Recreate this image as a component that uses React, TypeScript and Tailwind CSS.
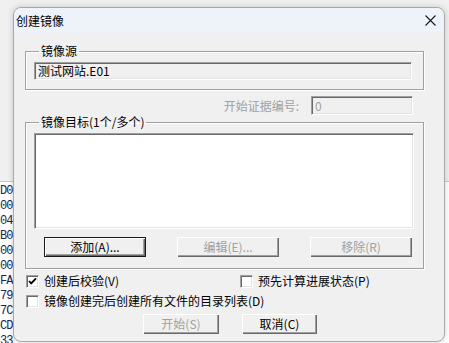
import React from "react";

const cjk = { fontFamily: '"Noto Sans CJK SC", "Noto Sans", sans-serif' };

const hexRows = ["D0", "00", "04", "B0", "00", "00", "FA", "79", "7C", "CD", "33"];

function Sunken({ className, children }: { className: string; children?: React.ReactNode }) {
  return (
    <div
      className={
        "border border-t-[#a0a0a0] border-l-[#a0a0a0] border-r-white border-b-white shadow-[inset_1px_1px_0_#696969,inset_-1px_-1px_0_#e3e3e3] " +
        className
      }
    >
      {children}
    </div>
  );
}

function Button({
  label,
  width,
  disabled,
  isDefault,
}: {
  label: string;
  width: string;
  disabled?: boolean;
  isDefault?: boolean;
}) {
  const base = "flex h-[20px] items-center justify-center text-[12px] leading-[14px] " + width;
  if (isDefault) {
    return (
      <div className={base + " border border-[#1a1a1a] bg-[#f0f0f0] text-black shadow-[inset_1px_1px_0_white,inset_-1px_-1px_0_#696969,inset_-2px_-2px_0_#a0a0a0]"}>
        {label}
      </div>
    );
  }
  return (
    <div
      className={
        base +
        " bg-[#f0f0f0] shadow-[inset_1px_1px_0_white,inset_-1px_-1px_0_#696969,inset_-2px_-2px_0_#a0a0a0] " +
        (disabled ? "text-[#a0a0a0]" : "text-black")
      }
    >
      {label}
    </div>
  );
}

function Checkbox({ label, checked }: { label: string; checked?: boolean }) {
  return (
    <div className="flex items-center gap-[5px]">
      <div className="flex h-[13px] w-[13px] items-center justify-center border border-t-[#a0a0a0] border-l-[#a0a0a0] border-r-white border-b-white bg-white shadow-[inset_1px_1px_0_#696969,inset_-1px_-1px_0_#e3e3e3]">
        {checked && (
          <svg width="9" height="9" viewBox="0 0 9 9">
            <path d="M1 4 L3.2 6.4 L8 1.4" fill="none" stroke="#000" strokeWidth="1.8" />
          </svg>
        )}
      </div>
      <span className="text-[12px] leading-[14px] text-black">{label}</span>
    </div>
  );
}

export default function App() {
  return (
    <div className="relative h-[343px] w-[449px] overflow-hidden bg-white" style={cjk}>
      {/* background window */}
      <div className="flex h-full flex-col">
        <div className="h-[182px] shrink-0 border-b border-[#c8c8c8] bg-[#f0f0f0]" />
        <div className="flex flex-1 flex-col overflow-hidden bg-white pt-[2px]">
          {hexRows.map((h, i) => (
            <div
              key={i}
              className="w-[13px] shrink-0 overflow-hidden text-[12px] leading-[15px] tracking-[-1px] text-[#1c2550]"
              style={{ fontFamily: '"Liberation Mono", monospace' }}
            >
              {h}
            </div>
          ))}
        </div>
      </div>

      {/* dialog */}
      <div className="absolute left-[13px] top-[7px] flex h-[335px] w-[432px] flex-col overflow-hidden rounded-[8px] border border-[#a8a8a8] bg-[#f0f0f0] shadow-[0_0_6px_rgba(0,0,0,0.18)]">
        <div className="flex h-[25px] items-center justify-between bg-[#eef2f9] pl-[2px] pr-[8px]">
          <span className="text-[12px] leading-[14px] text-black">创建镜像</span>
          <svg width="11" height="11" viewBox="0 0 11 11">
            <path d="M0.5 0.5 L10.5 10.5 M10.5 0.5 L0.5 10.5" stroke="#1a1a1a" strokeWidth="1.1" />
          </svg>
        </div>

        <div className="flex flex-col pl-[11px]">
          <fieldset className="mt-[11px] w-[399px] border border-[#a0a0a0] pb-[9px] pl-[8px] shadow-[inset_1px_1px_0_white,1px_1px_0_white]">
            <legend className="ml-[5px] px-[2px] text-[12px] leading-[14px] text-black">镜像源</legend>
            <Sunken className="mt-[4px] flex h-[18px] w-[378px] items-center bg-[#f0f0f0] pl-[3px]">
              <span className="text-[12px] leading-[14px] text-black">测试网站.E01</span>
            </Sunken>
          </fieldset>

          <div className="mt-[6px] flex w-[399px] items-center justify-end gap-[12px] pr-[11px]">
            <span className="text-[12px] leading-[14px] text-[#a0a0a0]">开始证据编号:</span>
            <Sunken className="flex h-[19px] w-[102px] items-center bg-[#f0f0f0] pl-[3px]">
              <span className="text-[12px] leading-[14px] text-[#a0a0a0]">0</span>
            </Sunken>
          </div>

          <fieldset className="w-[399px] border border-[#a0a0a0] pb-[11px] pl-[8px] shadow-[inset_1px_1px_0_white,1px_1px_0_white]">
            <legend className="ml-[5px] px-[2px] text-[12px] leading-[14px] text-black">镜像目标(1个/多个)</legend>
            <Sunken className="mt-[4px] h-[96px] w-[380px] bg-white" />
            <div className="ml-[10px] mt-[8px] flex gap-[31px]">
              <Button label="添加(A)..." width="w-[102px]" isDefault />
              <Button label="编辑(E)..." width="w-[102px]" disabled />
              <Button label="移除(R)" width="w-[102px]" disabled />
            </div>
          </fieldset>

          <div className="mt-[5px] flex pl-[1px]">
            <div className="w-[214px]">
              <Checkbox label="创建后校验(V)" checked />
            </div>
            <Checkbox label="预先计算进展状态(P)" />
          </div>
          <div className="mt-[6px] pl-[1px]">
            <Checkbox label="镜像创建完后创建所有文件的目录列表(D)" />
          </div>

          <div className="mt-[6px] flex gap-[23px] pl-[118px]">
            <Button label="开始(S)" width="w-[76px]" disabled />
            <Button label="取消(C)" width="w-[75px]" />
          </div>
        </div>
      </div>
    </div>
  );
}
